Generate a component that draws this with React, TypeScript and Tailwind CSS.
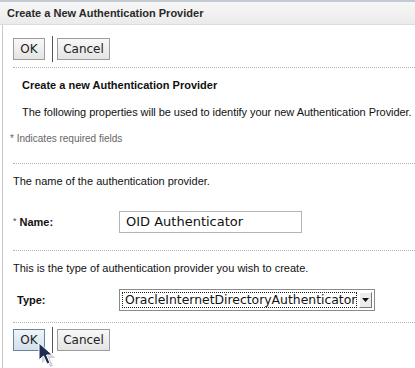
import React from "react";

const Btn = ({ label, w, hover }: { label: string; w: string; hover?: boolean }) => (
  <button
    className={`${w} h-[22px] border text-[12px] text-[#222] flex items-center justify-center ${
      hover
        ? "bg-gradient-to-b from-[#eef4fa] to-[#d3e0ec] border-[#6f8298]"
        : "bg-gradient-to-b from-[#f8f8f8] to-[#e4e4e4] border-[#9c9c9c]"
    }`}
    style={{ fontFamily: '"DejaVu Sans", sans-serif' }}
  >
    {label}
  </button>
);

const ButtonRow = ({ hover }: { hover?: boolean }) => (
  <div className="flex items-center h-[26px]">
    <Btn label="OK" w="w-[32px]" hover={hover} />
    <div className="w-px h-[26px] bg-[#555] ml-[7px] mr-[4px]" />
    <Btn label="Cancel" w="w-[53px]" />
  </div>
);

const Dotted = () => <div className="border-t border-dotted border-[#b4b4b4]" />;

export default function App() {
  return (
    <div
      className="w-[415px] h-[368px] bg-white overflow-hidden flex flex-col text-[11px] text-[#111] whitespace-nowrap"
      style={{ fontFamily: '"Liberation Sans", Arial, sans-serif' }}
    >
      <div className="h-[2px] bg-[#c4cad2]" />
      <div className="h-[23px] bg-gradient-to-b from-[#f7f7f7] to-[#ebebeb] border-b border-[#dcdcdc] flex items-center pl-[7px]">
        <span className="font-bold text-[11px] text-[#2a2a2a]">Create a New Authentication Provider</span>
      </div>
      <div className="flex-1 ml-[2px] border-l border-[#c8c8c8] pl-[10px] relative">
        <div className="h-[11px]" />
        <ButtonRow />
        <div className="h-[5px]" />
        <Dotted />
        <div className="h-[34px] flex items-center pl-[9px] font-bold">
          Create a new Authentication Provider
        </div>
        <div className="h-[20px] flex items-center pl-[9px] tracking-[-0.05px]">
          The following properties will be used to identify your new Authentication Provider.
        </div>
        <div className="h-[32px] flex items-center -ml-[3px] text-[10px] text-[#666]">
          * Indicates required fields
        </div>
        <div className="h-[9px]" />
        <Dotted />
        <div className="h-[35px] flex items-center">The name of the authentication provider.</div>
        <div className="h-[11px]" />
        <div className="h-[24px] flex items-center">
          <div className="w-[106px] flex items-center">
            <span className="text-[9px] text-[#444] mr-[3px]">*</span>
            <span className="font-bold">Name:</span>
          </div>
          <div
            className="w-[183px] h-[22px] border border-[#b4b4b4] flex items-center pl-[6px] text-[13px] text-[#111]"
            style={{ fontFamily: '"DejaVu Sans", sans-serif' }}
          >
            OID Authenticator
          </div>
        </div>
        <div className="h-[16px]" />
        <Dotted />
        <div className="h-[35px] flex items-center">This is the type of authentication provider you wish to create.</div>
        <div className="h-[2px]" />
        <div className="h-[24px] flex items-center">
          <div className="w-[106px] pl-[4px] font-bold">Type:</div>
          <div
            className="w-[256px] h-[22px] border border-[#8a8a8a] bg-white flex items-center p-[2px] text-[12.4px] text-[#111]"
            style={{ fontFamily: '"DejaVu Sans", sans-serif' }}
          >
            <div className="flex-1 h-full border border-dotted border-[#222] flex items-center pl-[2px]">
              OracleInternetDirectoryAuthenticator
            </div>
            <div className="w-[13px] h-[16px] ml-[2px] bg-[#ececec] border-t border-l border-white border-r border-b border-r-[#777] border-b-[#777] flex items-center justify-center">
              <svg width="7" height="4" viewBox="0 0 7 4">
                <path d="M0 0h7L3.5 4z" fill="#111" />
              </svg>
            </div>
          </div>
        </div>
        <div className="h-[10px]" />
        <Dotted />
        <div className="h-[4px]" />
        <ButtonRow hover />
        <svg
          className="absolute left-[34px] top-[316px]"
          width="24"
          height="28"
          viewBox="0 0 24 28"
        >
          <path d="M2 2 L2 19 L6.5 15 L10 23 L13 22 L9.5 14 L15.5 14 Z" fill="#9a9a9a" opacity="0.45" transform="translate(3 3)" />
          <path d="M2 2 L2 19 L6.5 15 L10 23 L13 22 L9.5 14 L15.5 14 Z" fill="#1c2c52" stroke="#fff" strokeWidth="1" />
        </svg>
      </div>
    </div>
  );
}
